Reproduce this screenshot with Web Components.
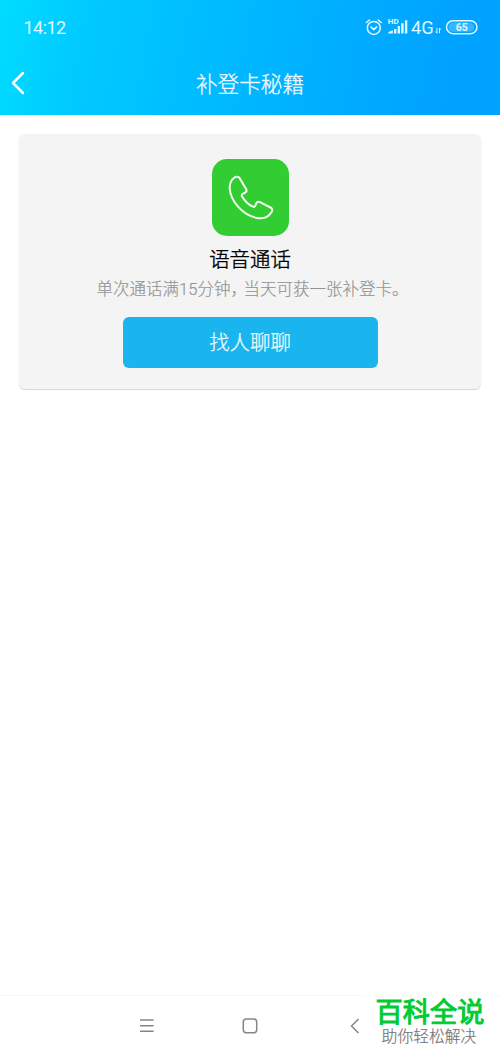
<!DOCTYPE html>
<html lang="zh-CN"><head><meta charset="utf-8"><title>补登卡秘籍</title>
<style>
html,body{margin:0;height:100%;background:#fff}
body{font-family:Roboto,"Noto Sans CJK SC",sans-serif;overflow:hidden}
</style></head><body>
<app-screen></app-screen>
<script>
const define=(name,html)=>customElements.define(name,class extends HTMLElement{
  constructor(){super();this.attachShadow({mode:'open'}).innerHTML=html;}
});
define('status-bar',`<style>
:host{display:flex;height:54px;box-sizing:border-box;padding:0 22px 0 23.5px;justify-content:space-between;align-items:center;color:#e2f8ff}
time{font:400 18px/20px Roboto,sans-serif;letter-spacing:-.55px;padding-top:2px}
svg{display:block;width:114px;height:24px}
text{font-family:Roboto,sans-serif;fill:currentColor}
</style><time>14:12</time>
<svg viewBox="0 0 114 24" fill="none" stroke="currentColor" stroke-linecap="round" stroke-linejoin="round">
<g stroke-width="1.5"><circle cx="9.8" cy="12.9" r="6.5"/><path d="M2.4 7.5 5.5 5M14.1 5 17.2 7.5M7 11.9 9.8 14.6 12.7 11.9"/></g>
<text x="23.8" y="9.4" font-size="7.4" font-weight="700" stroke="none" textLength="10.8" lengthAdjust="spacingAndGlyphs">HD</text>
<path stroke-linecap="butt" stroke-width="2.4" d="M31.2 18.5V14M34.8 18.5V11M38.4 18.5V8.2M42.1 18.5V5.2"/><path stroke="none" fill="currentColor" d="M24.4 18.5V17L28.8 15.2V18.5Z"/>
<text x="47" y="18.9" font-size="18" stroke="none" textLength="22.8" lengthAdjust="spacingAndGlyphs">4G</text>
<path stroke-width="1" stroke-linecap="butt" d="M73 13V18.2L71.6 16.6M75.5 18.2V13L77 14.8"/>
<rect x="82.5" y="5.7" width="30.5" height="13" rx="6.5" stroke-width="1.5"/>
<path d="M89 7.6H103.5Q110 7.6 110 12.2T103.5 16.8H89Q84.5 16.8 84.5 12.2T89 7.6Z" fill="#67ccff" fill-opacity=".5" stroke="none"/>
<text x="91.7" y="16.2" font-size="11.2" font-weight="700" stroke="none" textLength="12" lengthAdjust="spacingAndGlyphs">65</text>
</svg>`);
define('title-bar',`<style>
:host{display:grid;grid-template-columns:40px 1fr 40px;height:60px;align-items:center}
svg{width:16px;height:26px;margin-left:10px;margin-top:-3px}
h1{margin:-2px 0 0;text-align:center;font:300 21.6px/30px "Noto Sans CJK SC",sans-serif;color:#effaff;-webkit-text-stroke:.3px}
</style><svg viewBox="0 0 16 26" fill="none" stroke="#fff" stroke-width="2.5" stroke-linecap="round" stroke-linejoin="round"><path d="M13 3 3 13 13 23"/></svg><h1><slot></slot></h1>`);
define('app-header',`<style>:host{display:block;height:114.6px;background:linear-gradient(100deg,#00dcff 0%,#00caff 17%,#00bdff 40%,#00adff 68%,#00a2ff 90%)}</style><slot></slot>`);
define('call-icon',`<style>:host{display:block;width:77px;height:77px;border-radius:15px;background:#32cd32}svg{display:block}</style>
<svg width="77" height="77" viewBox="0 0 77 77" fill="none" stroke="#f2fff2" stroke-width="2" stroke-linejoin="round"><path d="M22.2 18.7C24 17.3 26.6 17.3 27.7 19.2L34.2 30.2C35.2 32 34.2 33.2 32.4 34L30.8 34.8C29.4 35.5 29.5 36.4 30.2 37.7C32.6 41.8 36.5 45.5 40.8 47.6C42.1 48.2 42.8 47.8 43.3 46.6L44 44.8C44.8 42.7 46 42.2 48 43.2L58.5 48.5C60.5 49.5 60.8 51.3 59.4 53.3C56.3 58.5 51.3 60.1 45 59C31.2 56.3 18.5 42.4 17.7 29.5C17.5 24.8 19 21 22.2 18.7Z"/></svg>`);
define('action-button',`<style>:host{display:block}button{display:block;width:255px;height:51px;padding:0 0 2px;border:0;border-radius:6px;background:#1ab4ef;color:#effaff;font:300 20.4px/30px "Noto Sans CJK SC",sans-serif;-webkit-text-stroke:.25px}</style><button><slot></slot></button>`);
define('tip-card',`<style>
:host{display:flex;flex-direction:column;align-items:center;box-sizing:border-box;height:255px;margin:19.4px 19px 0;padding-top:25px;border-radius:6px;background:#f4f4f4;box-shadow:0 1px 1px #d6d6d6}
h2{margin:7px 0 0;font:300 20.4px/30px "Noto Sans CJK SC",sans-serif;color:#000;-webkit-text-stroke:.4px}
p{margin:6px 0 0 5px;font:300 16.5px/22px Roboto,"Noto Sans CJK SC",sans-serif;color:#949494;white-space:nowrap;-webkit-text-stroke:.2px}
action-button{margin-top:16px}
</style><call-icon></call-icon><h2><slot name="title"></slot></h2><p><slot></slot></p><action-button><slot name="action"></slot></action-button>`);
define('nav-bar',`<style>:host{display:block;height:61px;box-sizing:border-box;border-top:1.5px solid #f7f7f7}svg{display:block}</style>
<svg width="370" height="60" viewBox="0 0 370 60" fill="none" stroke="#858585" stroke-width="1.5"><path d="M140 24H153.6M140 29.7H153.6M140 35.3H153.6"/><rect x="243.3" y="23.1" width="13.4" height="13.6" rx="3"/><path d="M358.5 23 351.5 30 358.5 37"/></svg>`);
define('site-mark',`<style>:host{display:block;width:130px;height:64px;background:#fff;text-align:center;white-space:nowrap}
b{display:block;font:400 27.2px/30px "Noto Sans CJK SC",sans-serif;color:#00cb32;padding-top:3px;-webkit-text-stroke:1px}
span{display:block;font:300 15.8px/18px "Noto Sans CJK SC",sans-serif;color:#757575;margin:2px 2px 0 0;-webkit-text-stroke:.2px}
</style><b>百科全说</b><span>助你轻松解决</span>`);
define('app-screen',`<style>
:host{display:flex;flex-direction:column;position:relative;width:500px;height:1056px;background:#fff}
nav-bar{margin-top:auto}
.comma{letter-spacing:-3.5px}
site-mark{position:absolute;right:5px;bottom:0}
</style><app-header><status-bar></status-bar><title-bar>补登卡秘籍</title-bar></app-header>
<tip-card><span slot="title">语音通话</span>单次通话满15分钟<span class="comma">，</span>当天可获一张补登卡。<span slot="action">找人聊聊</span></tip-card>
<nav-bar></nav-bar><site-mark></site-mark>`);
</script></body></html>
